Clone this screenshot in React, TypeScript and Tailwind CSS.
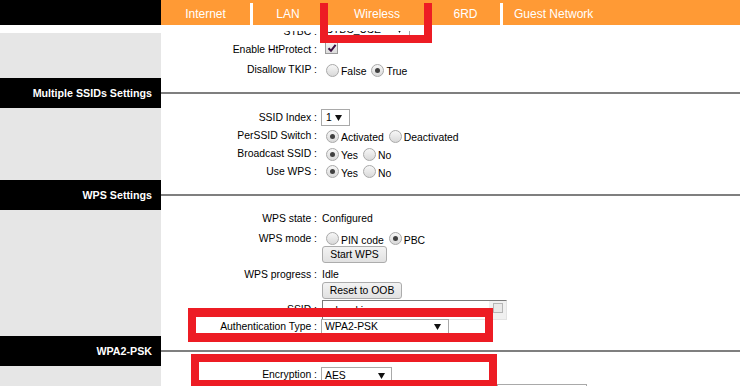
import type { ReactNode } from 'react'

function Radio({ on }: { on?: boolean }) {
  return (
    <span className="relative inline-block w-[13px] h-[13px] shrink-0 rounded-full border border-[#a9a9a9] bg-linear-to-b from-[#f7f7f7] to-[#d9d9d9]">
      {on && <span className="absolute left-[3px] top-[3px] w-[5px] h-[5px] rounded-full bg-[#404040]" />}
    </span>
  )
}

function Opt({ on, label }: { on?: boolean; label: string }) {
  return (
    <>
      <Radio on={on} />
      <span className="ml-[2px] mr-[5px] pt-[4px]">{label}</span>
    </>
  )
}

function Check() {
  return (
    <span className="inline-flex items-center justify-center w-[13px] h-[13px] border border-[#9a9a9a] bg-linear-to-b from-[#f5f5f5] to-[#dcdcdc]">
      <svg width="10" height="10" viewBox="0 0 10 10">
        <path d="M1.5 5.2 L4 7.8 L8.6 1.8" fill="none" stroke="#3b1142" strokeWidth="2" />
      </svg>
    </span>
  )
}

function Arrow() {
  return (
    <svg width="7" height="6" viewBox="0 0 7 6" className="shrink-0">
      <path d="M0 0h7L3.5 6z" fill="#111" />
    </svg>
  )
}

function Select({ value, w, pl = 'pl-[3px]', pr = 'pr-[6px]' }: { value: string; w: string; pl?: string; pr?: string }) {
  return (
    <div className={`flex items-center justify-between h-[17px] border border-[#a9a9a9] bg-white ${w} ${pl} ${pr}`}>
      <span>{value}</span>
      <Arrow />
    </div>
  )
}

function Btn({ children, w }: { children: ReactNode; w: string }) {
  return (
    <div className={`flex items-center justify-center h-[17px] ml-[1px] rounded-[3px] border border-[#acacac] bg-linear-to-b from-[#f3f3f3] to-[#e1e1e1] ${w}`}>
      {children}
    </div>
  )
}

function Row({ label, h, className = 'items-center', children }: { label?: string; h: string; className?: string; children?: ReactNode }) {
  return (
    <div className={`flex ${h} ${className}`}>
      <div className="w-[156px] shrink-0 text-right whitespace-nowrap">{label}</div>
      <div className="flex items-center pl-[4px] whitespace-nowrap">{children}</div>
    </div>
  )
}

function Band({ title }: { title: string }) {
  return (
    <div className="flex h-[30px]">
      <div className="w-[161px] shrink-0 bg-black flex items-center justify-end pr-[9px] text-[10.7px] font-bold text-white">
        {title}
      </div>
      <div className="flex-1 flex items-center">
        <div className="h-[2px] w-full bg-[#7f7f7f]" />
      </div>
    </div>
  )
}

export default function App() {
  return (
    <div className="relative w-[740px] h-[386px] overflow-hidden bg-white font-['Liberation_Sans',Arial,sans-serif] text-[10.4px] text-black">
      {/* top tabs */}
      <div className="flex h-[25px]">
        <div className="w-[161px] shrink-0 bg-black" />
        <div className="flex-1 flex bg-[#ff9a35] text-[12px] text-white">
          <div className="w-[89px] flex items-center justify-center pt-[2px]">Internet</div>
          <div className="w-[3px] h-[22px] self-end bg-white" />
          <div className="w-[70px] flex items-center justify-center pt-[2px]">LAN</div>
          <div className="w-[108px] flex items-center justify-center pt-[2px]">Wireless</div>
          <div className="w-[69px] flex items-center justify-center pt-[2px]">6RD</div>
          <div className="w-[3px] h-[22px] self-end bg-white" />
          <div className="flex items-center pl-[11px] pt-[2px]">Guest Network</div>
        </div>
      </div>

      {/* HT settings tail, scrolled under the header */}
      <div className="flex h-[53px]">
        <div className="w-[161px] shrink-0 flex flex-col">
          <div className="h-[8px] bg-white" />
          <div className="flex-1 bg-[#e6e6e6]" />
        </div>
        <div className="flex-1 flex flex-col">
          <div className="h-[6px]" />
          <div className="flex h-[8px] items-end overflow-hidden">
            <div className="w-[156px] shrink-0 h-[15px] leading-[15px] text-right">STBC :</div>
            <div className="pl-[5px] pb-[1px] shrink-0">
              <Select value="STBC_USE" w="w-[88px]" />
            </div>
          </div>
          <Row label="Enable HtProtect :" h="h-[21px]">
            <span className="ml-[4px]"><Check /></span>
          </Row>
          <Row label="Disallow TKIP :" h="h-[18px]" className="items-center pt-[2px]">
            <span className="ml-[5px]" />
            <Opt label="False" />
            <Opt on label="True" />
          </Row>
        </div>
      </div>

      <Band title="Multiple SSIDs Settings" />

      <div className="flex h-[72px]">
        <div className="w-[161px] shrink-0 bg-[#e6e6e6]" />
        <div className="flex-1 flex flex-col">
          <Row label="SSID Index :" h="h-[19px]">
            <Select value="1" w="w-[29px]" pl="pl-[4px]" pr="pr-[7px]" />
          </Row>
          <Row label="PerSSID Switch :" h="h-[18px]">
            <span className="ml-[5px]" />
            <Opt on label="Activated" />
            <Opt label="Deactivated" />
          </Row>
          <Row label="Broadcast SSID :" h="h-[18px]">
            <span className="ml-[5px]" />
            <Opt on label="Yes" />
            <Opt label="No" />
          </Row>
          <Row label="Use WPS :" h="h-[17px]">
            <span className="ml-[5px]" />
            <Opt on label="Yes" />
            <Opt label="No" />
          </Row>
        </div>
      </div>

      <Band title="WPS Settings" />

      <div className="flex h-[126px]">
        <div className="w-[161px] shrink-0 bg-[#e6e6e6]" />
        <div className="flex-1 flex flex-col">
          <Row label="WPS state :" h="h-[18px]">
            <span className="ml-[1px]">Configured</span>
          </Row>
          <Row label="WPS mode :" h="h-[18px]" className="items-center pt-[3px]">
            <span className="ml-[5px]" />
            <Opt label="PIN code" />
            <Opt on label="PBC" />
          </Row>
          <Row h="h-[18px]" className="items-start">
            <Btn w="w-[65px]">Start WPS</Btn>
          </Row>
          <Row label="WPS progress :" h="h-[18px]" className="items-center pt-[3px]">
            <span className="ml-[1px]">Idle</span>
          </Row>
          <Row h="h-[18px]" className="items-start">
            <Btn w="w-[80px]">Reset to OOB</Btn>
          </Row>
          <Row label="SSID :" h="h-[18px]" className="items-start pt-[2px]">
            <div className="-mt-[2px] ml-[1px] flex w-[185px] h-[20px] border-t border-l border-[#7a7a7a] border-r border-b border-r-[#e3e3e3] border-b-[#e3e3e3] bg-white">
              <span className="flex-1 pl-[2px] pt-[2px]">cyberskis</span>
              <div className="w-[17px] bg-[#f0f0f0] flex justify-center pt-[2px]">
                <div className="w-[10px] h-[10px] border border-[#b5b5b5] bg-[#e9e9e9]" />
              </div>
            </div>
          </Row>
          <Row label="Authentication Type :" h="h-[18px]">
            <Select value="WPA2-PSK" w="w-[128px]" pr="pr-[7px]" />
          </Row>
        </div>
      </div>

      <Band title="WPA2-PSK" />

      <div className="flex h-[40px]">
        <div className="w-[161px] shrink-0 bg-[#e6e6e6]" />
        <div className="flex-1 flex flex-col">
          <Row label="Encryption :" h="h-[18px]" className="items-start pt-[1px]">
            <Select value="AES" w="w-[71px]" />
          </Row>
          <Row h="h-[20px]" className="items-start">
            <div className="ml-[176px] w-[90px] h-[18px] border border-[#a9a9a9] bg-white" />
          </Row>
        </div>
      </div>

      {/* red annotation boxes */}
      <div className="absolute left-[320px] top-[3px] w-[112px] h-[40px] border-x-[8px] border-b-[8px] border-[#ed1c24]" />
      <div className="absolute left-[188px] top-[308px] w-[305px] h-[34px] border-[8px] border-y-[9px] border-[#ed1c24]" />
      <div className="absolute left-[191px] top-[354px] w-[306px] h-[34px] border-[8px] border-[#ed1c24]" />
    </div>
  )
}
